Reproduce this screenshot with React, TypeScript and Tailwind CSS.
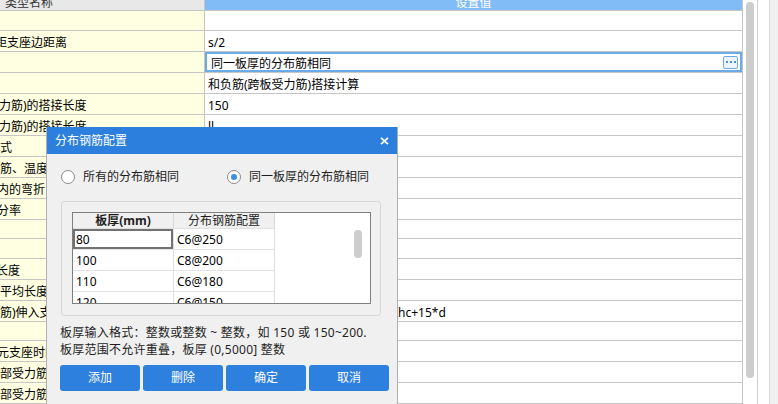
import React from "react";

type Row = { l: string; lc?: string; r: string; rc?: string; sel?: boolean; first?: boolean };

const rows: Row[] = [
  { l: "", r: "", first: true },
  { l: "距支座边距离", lc: "-ml-[5px]", r: "s/2" },
  { l: "", r: "同一板厚的分布筋相同", sel: true },
  { l: "", r: "和负筋(跨板受力筋)搭接计算" },
  { l: "力筋)的搭接长度", lc: "-ml-[1px]", r: "150" },
  { l: "力筋)的搭接长度", lc: "-ml-[1px]", r: "ll" },
  { l: "式", r: "" },
  { l: "筋、温度", r: "" },
  { l: "内的弯折", lc: "-ml-[3px]", r: "" },
  { l: "分率", lc: "-ml-[3px]", r: "" },
  { l: "", r: "" },
  { l: "", r: "" },
  { l: "长度", lc: "-ml-[4px]", r: "" },
  { l: "平均长度", r: "" },
  { l: "筋)伸入支", r: "hc+15*d", rc: "pl-[193px]" },
  { l: "", r: "" },
  { l: "元支座时的", lc: "-ml-[3px]", r: "" },
  { l: "部受力筋", r: "" },
  { l: "部受力筋", r: "" },
];

const thick = [
  { t: "80", c: "C6@250", sel: true },
  { t: "100", c: "C8@200" },
  { t: "110", c: "C6@180" },
  { t: "120", c: "C6@150" },
];

function Radio({ on }: { on?: boolean }) {
  return (
    <div className="flex h-[14px] w-[14px] shrink-0 items-center justify-center rounded-full border border-[#8a8a8a] bg-white">
      {on && <div className="h-[6px] w-[6px] rounded-full bg-[#3b8de6]" />}
    </div>
  );
}

function PropertyGrid() {
  return (
    <div className="flex w-[743px] flex-col">
      <div className="flex h-[12px] border-b border-[#c6c6c6]">
        <div className="w-[205px] overflow-hidden border-r border-[#c6c6c6] bg-[#e8e8e8] pl-[5px] leading-[12px] text-[#333]">
          <div className="-mt-[3px]">类型名称</div>
        </div>
        <div className="flex-1 overflow-hidden border-r border-[#c6c6c6] bg-[#82bcf6] text-center leading-[12px] text-white">
          <div className="-mt-[3px]">设置值</div>
        </div>
      </div>
      {rows.map((row, i) => (
        <div key={i} className={`flex border-b border-[#c6c6c6] ${row.first ? "h-[22px]" : "h-[21px]"}`}>
          <div className="w-[205px] overflow-hidden whitespace-nowrap border-r border-[#c6c6c6] bg-[#ffffe1] pt-[4px] leading-[16px] text-black">
            <div className={row.lc ?? ""}>{row.l}</div>
          </div>
          {row.sel ? (
            <div className="flex flex-1 items-center justify-between border-r border-[#c6c6c6] bg-white pl-[6px] pr-[4px] shadow-[inset_0_0_0_2px_#6aaae6]">
              <span className="pt-[4px] leading-[16px] text-black">{row.r}</span>
              <div className="flex h-[13px] w-[15px] items-center justify-center gap-[2px] rounded-[2px] border border-[#6aaae6] bg-[#eef4fb]">
                <span className="h-[2px] w-[2px] bg-[#4a90d9]" />
                <span className="h-[2px] w-[2px] bg-[#4a90d9]" />
                <span className="h-[2px] w-[2px] bg-[#4a90d9]" />
              </div>
            </div>
          ) : (
            <div className={`flex-1 overflow-hidden whitespace-nowrap border-r border-[#c6c6c6] bg-white pt-[4px] leading-[16px] text-black ${row.rc ?? "pl-[3px]"}`}>
              {row.r}
            </div>
          )}
        </div>
      ))}
    </div>
  );
}

function ScrollArea() {
  return (
    <div className="flex h-full flex-1">
      <div className="w-[3px] bg-white" />
      <div className="w-[8px] bg-white pt-[2px]">
        <div className="h-[376px] w-[8px] rounded-full bg-[#cdcdcd]" />
      </div>
      <div className="w-[3px] bg-white" />
      <div className="w-[1px] bg-[#d0d0d0]" />
      <div className="w-[11px] bg-white" />
      <div className="w-[1px] bg-[#dadada]" />
      <div className="flex-1 bg-[#f0f0f0]" />
    </div>
  );
}

function RebarDialog() {
  return (
    <div className="absolute left-[46px] top-[127px] flex h-[277px] w-[352px] flex-col border-x border-[#b0b0b0] bg-[#f0f0f0] text-[#1e1e1e]">
      <div className="flex h-[27px] shrink-0 items-center justify-between bg-[#2c7fdd] pl-[8px] pr-[8px] text-white">
        <span className="leading-[16px]">分布钢筋配置</span>
        <svg width="9" height="8" viewBox="0 0 9 8">
          <path d="M1 0.8 L8 7.2 M8 0.8 L1 7.2" stroke="#fff" strokeWidth="1.8" />
        </svg>
      </div>

      <div className="mt-[15px] flex h-[15px] items-center pl-[14px]">
        <div className="flex w-[166px] items-center">
          <Radio />
          <span className="ml-[8px] leading-[15px]">所有的分布筋相同</span>
        </div>
        <div className="flex items-center">
          <Radio on />
          <span className="ml-[8px] leading-[15px]">同一板厚的分布筋相同</span>
        </div>
      </div>

      <div className="ml-[14px] mt-[17px] h-[115px] w-[320px] rounded-[3px] border border-[#d6d6d6] pl-[10px] pt-[10px]">
        <div className="flex h-[92px] w-[299px] overflow-hidden border border-[#7f7f7f] bg-white">
          <div className="flex w-[202px] flex-col">
            <div className="flex h-[16px] shrink-0 border-b border-[#e0e0e0] bg-[#f0f0f0]">
              <div className="w-[101px] border-r border-[#d8d8d8] text-center font-bold leading-[15px]">板厚(mm)</div>
              <div className="w-[101px] border-r border-[#d8d8d8] text-center leading-[15px]">分布钢筋配置</div>
            </div>
            {thick.map((r) => (
              <div key={r.t} className="flex h-[21px] shrink-0 border-b border-[#e3e3e3]">
                <div className={`w-[101px] border-r border-[#e0e0e0] pl-[3px] pt-[2px] leading-[18px] text-black ${r.sel ? "shadow-[inset_0_0_0_2px_#727272]" : ""}`}>
                  {r.t}
                </div>
                <div className="w-[101px] border-r border-[#e0e0e0] pl-[3px] pt-[2px] leading-[18px] text-black">{r.c}</div>
              </div>
            ))}
          </div>
          <div className="flex-1">
            <div className="ml-[79px] mt-[17px] h-[28px] w-[8px] rounded-full bg-[#cdcdcd]" />
          </div>
        </div>
      </div>

      <div className="mt-[8px] pl-[13px] leading-[17px] tracking-[0.25px]">
        <div>板厚输入格式：整数或整数 ~ 整数，如 150 或 150~200.</div>
        <div>板厚范围不允许重叠，板厚 (0,5000] 整数</div>
      </div>

      <div className="mt-[7px] flex gap-[3px] pl-[13px]">
        {["添加", "删除", "确定", "取消"].map((b) => (
          <div key={b} className="flex h-[26px] w-[80px] items-center justify-center rounded-[3px] bg-[#2e80de] text-white">
            {b}
          </div>
        ))}
      </div>
    </div>
  );
}

export default function App() {
  return (
    <div className="relative flex h-[404px] w-[778px] overflow-hidden bg-white font-['Noto_Sans','Noto_Sans_CJK_SC',sans-serif] text-[12px]">
      <PropertyGrid />
      <ScrollArea />
      <RebarDialog />
    </div>
  );
}
